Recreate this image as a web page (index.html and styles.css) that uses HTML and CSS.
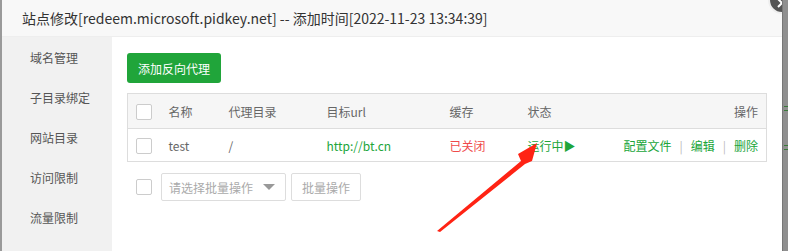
FILE: index.html
```html
<!DOCTYPE html>
<html lang="zh-CN">
<head>
    <meta charset="UTF-8">
    <title>站点修改</title>
    <link rel="stylesheet" href="styles.css">
</head>
<body>
    <div class="shade shade-left"></div>

    <div class="layer">
        <div class="layer-title">站点修改[redeem.microsoft.pidkey.net] -- 添加时间[2022-11-23 13:34:39]</div>
        <div class="layer-body">
            <ul class="side-menu">
                <li>域名管理</li>
                <li>子目录绑定</li>
                <li>网站目录</li>
                <li>访问限制</li>
                <li>流量限制</li>
            </ul>

            <div class="main">
                <button class="btn-green">添加反向代理</button>

                <table class="proxy-table">
                    <thead>
                        <tr>
                            <th class="col-check"><span class="checkbox"></span></th>
                            <th class="col-name">名称</th>
                            <th class="col-dir">代理目录</th>
                            <th class="col-url">目标url</th>
                            <th class="col-cache">缓存</th>
                            <th class="col-state">状态</th>
                            <th class="col-ops">操作</th>
                        </tr>
                    </thead>
                    <tbody>
                        <tr>
                            <td class="col-check"><span class="checkbox"></span></td>
                            <td>test</td>
                            <td>/</td>
                            <td class="url">http://bt.cn</td>
                            <td class="off">已关闭</td>
                            <td class="running">运行中▶</td>
                            <td class="col-ops">
                                <a href="#">配置文件</a><span class="sep">|</span><a href="#">编辑</a><span class="sep">|</span><a href="#">删除</a>
                            </td>
                        </tr>
                    </tbody>
                </table>

                <div class="batch">
                    <span class="checkbox"></span>
                    <div class="select">
                        <span>请选择批量操作</span>
                        <i class="caret"></i>
                    </div>
                    <button class="btn-plain">批量操作</button>
                </div>
            </div>
        </div>

        <span class="layer-close">
            <svg width="10" height="10" viewBox="0 0 10 10">
                <path d="M1 1 L9 9 M9 1 L1 9" stroke="#fff" stroke-width="2"/>
            </svg>
        </span>
    </div>

    <div class="shade shade-right">
        <i class="peek p1"></i>
        <i class="peek p2"></i>
    </div>

    <!-- annotation arrow -->
    <svg class="arrow" width="788" height="251" viewBox="0 0 788 251">
        <polygon points="437,231 521,161 518,154 537,143 532,161 525,164 440,232" fill="#ff2314"/>
    </svg>
</body>
</html>
```

FILE: styles.css
```css
* {
    margin: 0;
    padding: 0;
    box-sizing: border-box;
}

body {
    width: 788px;
    height: 251px;
    overflow: hidden;
    display: flex;
    background: #999;
    font-family: "Noto Sans CJK SC", "Microsoft YaHei", sans-serif;
    font-size: 12px;
    color: #666;
    position: relative;
}

.shade {
    height: 251px;
    background: #9a9a9a;
}

.shade-left {
    width: 2px;
}

.shade-right {
    width: 6px;
    position: relative;
    background: #8f8f8f;
    border-left: 1px solid #777;
}

.peek {
    position: absolute;
    left: 1px;
    width: 4px;
    height: 5px;
    border-top: 1px solid #3a7a3a;
    border-bottom: 1px solid #3a7a3a;
}

.p1 { top: 106px; }
.p2 { top: 145px; }

.layer {
    width: 780px;
    height: 251px;
    background: #fff;
    position: relative;
}

.layer-title {
    height: 37px;
    line-height: 36px;
    padding-left: 20px;
    background: #f8f8f8;
    border-bottom: 1px solid #eee;
    font-size: 14px;
    color: #333;
}

.layer-body {
    display: flex;
    height: 214px;
}

.side-menu {
    list-style: none;
    width: 110px;
    background: #f1f1f1;
    padding-top: 1px;
}

.side-menu li {
    height: 40px;
    line-height: 40px;
    padding-left: 28px;
    color: #555;
    font-size: 12px;
}

.main {
    flex: 1;
    padding: 16px 0 0 15px;
}

.btn-green {
    height: 30px;
    width: 94px;
    border: none;
    border-radius: 3px;
    background: #20a53a;
    color: #fff;
    font-family: inherit;
    font-size: 12px;
    margin-bottom: 10px;
    display: block;
}

.proxy-table {
    width: 640px;
    border-collapse: collapse;
    border: 1px solid #ddd;
    table-layout: fixed;
}

.proxy-table th,
.proxy-table td {
    text-align: left;
    font-weight: normal;
    padding: 0;
    white-space: nowrap;
}

.proxy-table thead tr {
    height: 35px;
    background: #f6f6f6;
    border-bottom: 1px solid #ddd;
}

.proxy-table tbody tr {
    height: 33px;
}

.col-check {
    width: 41px;
    padding-left: 8px !important;
}

.col-check .checkbox {
    vertical-align: middle;
}

.col-name { width: 60px; }
.col-dir { width: 98px; }
.col-url { width: 123px; }
.col-cache { width: 78px; }
.col-state { width: 90px; }

.col-ops {
    text-align: right !important;
    padding-right: 8px !important;
}

.checkbox {
    display: inline-block;
    width: 16px;
    height: 16px;
    border: 1px solid #ccc;
    border-radius: 2px;
    background: #fff;
}

.url {
    color: #20a53a;
    font-weight: bold;
}

.off {
    color: #ef4a4a;
}

.running {
    color: #20a53a;
}

.col-ops a {
    color: #20a53a;
    text-decoration: none;
}

.sep {
    color: #bbb;
    margin: 0 8px;
}

.batch {
    display: flex;
    align-items: center;
    margin-top: 11px;
    padding-left: 9px;
}

.select {
    width: 125px;
    height: 28px;
    margin-left: 9px;
    border: 1px solid #ddd;
    border-radius: 2px;
    display: flex;
    align-items: center;
    justify-content: space-between;
    padding: 0 10px 0 7px;
    color: #aaa;
}

.caret {
    width: 0;
    height: 0;
    border-left: 6px solid transparent;
    border-right: 6px solid transparent;
    border-top: 6px solid #999;
}

.btn-plain {
    height: 28px;
    width: 70px;
    margin-left: 5px;
    border: 1px solid #ddd;
    border-radius: 2px;
    background: #fff;
    color: #aaa;
    font-family: inherit;
    font-size: 12px;
}

.layer-close {
    position: absolute;
    left: 766px;
    top: -14px;
    width: 28px;
    height: 28px;
    border-radius: 50%;
    background: #555;
    display: flex;
    align-items: flex-end;
    justify-content: center;
    padding-bottom: 4px;
    border: 2px solid #eee;
}

.layer-close svg {
    display: block;
}

.arrow {
    position: absolute;
    left: 0;
    top: 0;
    pointer-events: none;
}
```
